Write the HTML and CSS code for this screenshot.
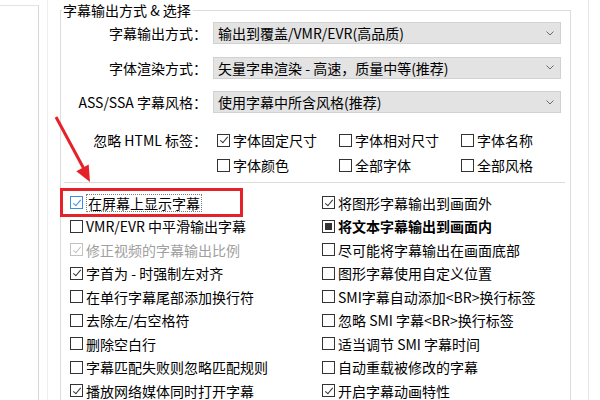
FILE: index.html
```html
<!DOCTYPE html>
<html lang="zh-CN">
<head>
<meta charset="utf-8">
<title>字幕输出方式 & 选择</title>
<link rel="stylesheet" href="styles.css">
</head>
<body>
<div class="sidebar"></div>
<div class="gutter"></div>
<div class="main">
  <fieldset class="group">
    <legend class="group-title">字幕输出方式 &amp; 选择</legend>
    <div class="selects">
      <label class="lbl">字幕输出方式：</label>
      <div class="combo"><span>输出到覆盖/VMR/EVR(高品质)</span><svg class="chev" width="8" height="5" viewBox="0 0 8 5"><polyline points="0.5,0.5 4,4 7.5,0.5" fill="none" stroke="#6b6b6b" stroke-width="1"/></svg></div>
      <label class="lbl">字体渲染方式：</label>
      <div class="combo"><span>矢量字串渲染 - 高速，质量中等(推荐)</span><svg class="chev" width="8" height="5" viewBox="0 0 8 5"><polyline points="0.5,0.5 4,4 7.5,0.5" fill="none" stroke="#6b6b6b" stroke-width="1"/></svg></div>
      <label class="lbl">ASS/SSA 字幕风格：</label>
      <div class="combo"><span>使用字幕中所含风格(推荐)</span><svg class="chev" width="8" height="5" viewBox="0 0 8 5"><polyline points="0.5,0.5 4,4 7.5,0.5" fill="none" stroke="#6b6b6b" stroke-width="1"/></svg></div>
    </div>
    <div class="tags">
      <label class="lbl">忽略 HTML 标签：</label>
      <div class="tag-grid">
        <div class="cb"><span class="box checked"></span><span>字体固定尺寸</span></div>
        <div class="cb"><span class="box"></span><span>字体相对尺寸</span></div>
        <div class="cb"><span class="box"></span><span>字体名称</span></div>
        <div class="cb"><span class="box"></span><span>字体颜色</span></div>
        <div class="cb"><span class="box"></span><span>全部字体</span></div>
        <div class="cb"><span class="box"></span><span>全部风格</span></div>
      </div>
    </div>
    <div class="sep"></div>
    <div class="options">
      <div class="cb"><span class="box checked focus-box"></span><span class="focus">在屏幕上显示字幕</span></div>
      <div class="cb"><span class="box"></span><span>VMR/EVR 中平滑输出字幕</span></div>
      <div class="cb disabled"><span class="box checked"></span><span>修正视频的字幕输出比例</span></div>
      <div class="cb"><span class="box checked"></span><span>字首为 - 时强制左对齐</span></div>
      <div class="cb"><span class="box"></span><span>在单行字幕尾部添加换行符</span></div>
      <div class="cb"><span class="box"></span><span>去除左/右空格符</span></div>
      <div class="cb"><span class="box"></span><span>删除空白行</span></div>
      <div class="cb"><span class="box"></span><span>字幕匹配失败则忽略匹配规则</span></div>
      <div class="cb"><span class="box checked"></span><span>播放网络媒体同时打开字幕</span></div>

      <div class="cb"><span class="box checked"></span><span>将图形字幕输出到画面外</span></div>
      <div class="cb bold"><span class="box indet"></span><span>将文本字幕输出到画面内</span></div>
      <div class="cb"><span class="box"></span><span>尽可能将字幕输出在画面底部</span></div>
      <div class="cb"><span class="box"></span><span>图形字幕使用自定义位置</span></div>
      <div class="cb"><span class="box"></span><span>SMI字幕自动添加&lt;BR&gt;换行标签</span></div>
      <div class="cb"><span class="box"></span><span>忽略 SMI 字幕&lt;BR&gt;换行标签</span></div>
      <div class="cb"><span class="box"></span><span>适当调节 SMI 字幕时间</span></div>
      <div class="cb"><span class="box"></span><span>自动重载被修改的字幕</span></div>
      <div class="cb"><span class="box checked"></span><span>开启字幕动画特性</span></div>
    </div>
  </fieldset>
</div>
<div class="rightpane"></div>

<svg class="annot" width="600" height="400" viewBox="0 0 600 400">
  <line x1="56" y1="117" x2="84" y2="169" stroke="#e5222a" stroke-width="3"/>
  <polygon points="76.3,171.2 90,182 88.7,164.6" fill="#e5222a"/>
  <rect x="61.5" y="189.5" width="180" height="26" fill="none" stroke="#e5222a" stroke-width="3"/>
</svg>
</body>
</html>
```

FILE: styles.css
```css
html, body {
  margin: 0;
  padding: 0;
}
body {
  position: relative;
  width: 600px;
  height: 400px;
  overflow: hidden;
  display: flex;
  background: #ffffff;
  color: #000000;
  font-family: "Noto Sans CJK SC", "Noto Sans", sans-serif;
  font-size: 14px;
  line-height: 20px;
}
.sidebar {
  flex: none;
  width: 38px;
  margin-top: 5px;
  border-top: 1px solid #e3e3e3;
  border-right: 1px solid #d6d6d6;
}
.gutter {
  flex: none;
  width: 8px;
  border-right: 1px solid #efefef;
}
.main {
  flex: none;
  height: 400px;
  padding-left: 12px;
}
.group {
  box-sizing: border-box;
  width: 511px;
  min-width: 0;
  height: 400px;
  margin: 0;
  padding: 2px 0 0 0;
  border: 1px solid #dcdcdc;
  border-bottom: none;
  overflow: hidden;
}
.group-title {
  margin-left: 1px;
  padding: 0 2px 0 1px;
  line-height: 20px;
}
.selects {
  display: grid;
  grid-template-columns: 146px 348px;
  grid-auto-rows: 22px;
  column-gap: 6px;
  row-gap: 12.5px;
  align-items: center;
}
.lbl {
  text-align: right;
  white-space: nowrap;
}
.combo {
  box-sizing: border-box;
  height: 22px;
  display: flex;
  align-items: center;
  justify-content: space-between;
  padding: 0 6px 0 4px;
  background: #e3e3e3;
  border: 1px solid #d2d2d2;
  white-space: nowrap;
}
.chev {
  flex: none;
}
.tags {
  margin-top: 17px;
  display: grid;
  grid-template-columns: 146px 348px;
  column-gap: 6px;
  align-items: start;
}
.tags .lbl {
  line-height: 20px;
}
.tag-grid {
  display: grid;
  grid-template-columns: repeat(3, 122px);
  grid-auto-rows: 20px;
  row-gap: 5px;
  padding-left: 4px;
}
.sep {
  height: 1px;
  margin: 7px 5px 0 3px;
  background: #dcdcdc;
}
.options {
  margin-top: 8px;
  padding-left: 9px;
  display: grid;
  grid-template-columns: 252px 1fr;
  grid-template-rows: repeat(9, 23.5px);
  grid-auto-flow: column;
}
.cb {
  display: flex;
  align-items: center;
  gap: 3px;
  white-space: nowrap;
}
.box {
  position: relative;
  flex: none;
  box-sizing: border-box;
  width: 13px;
  height: 13px;
  border: 1px solid #333333;
  background: #ffffff;
}
.box.checked::after {
  content: "";
  position: absolute;
  left: 3.5px;
  top: 0.5px;
  width: 3px;
  height: 7px;
  border-right: 1px solid #333333;
  border-bottom: 1px solid #333333;
  transform: rotate(40deg);
}
.box.indet::after {
  content: "";
  position: absolute;
  left: 2px;
  top: 2px;
  width: 7px;
  height: 7px;
  background: #333333;
}
.box.focus-box {
  border-color: #3a8ee6;
}
.box.focus-box::after {
  border-color: #3a8ee6;
}
.focus {
  line-height: 16px;
  padding: 0 1px;
  border: 1px dotted #7a7a7a;
}
.disabled {
  color: #a0a0a0;
}
.disabled .box {
  border-color: #c2c2c2;
}
.disabled .box::after {
  border-color: #c2c2c2;
}
.bold {
  font-weight: bold;
}
.rightpane {
  flex: 1;
  margin-left: 17px;
  border-left: 1px solid #e4e4e4;
}
.annot {
  position: absolute;
  left: 0;
  top: 0;
  pointer-events: none;
}
```
